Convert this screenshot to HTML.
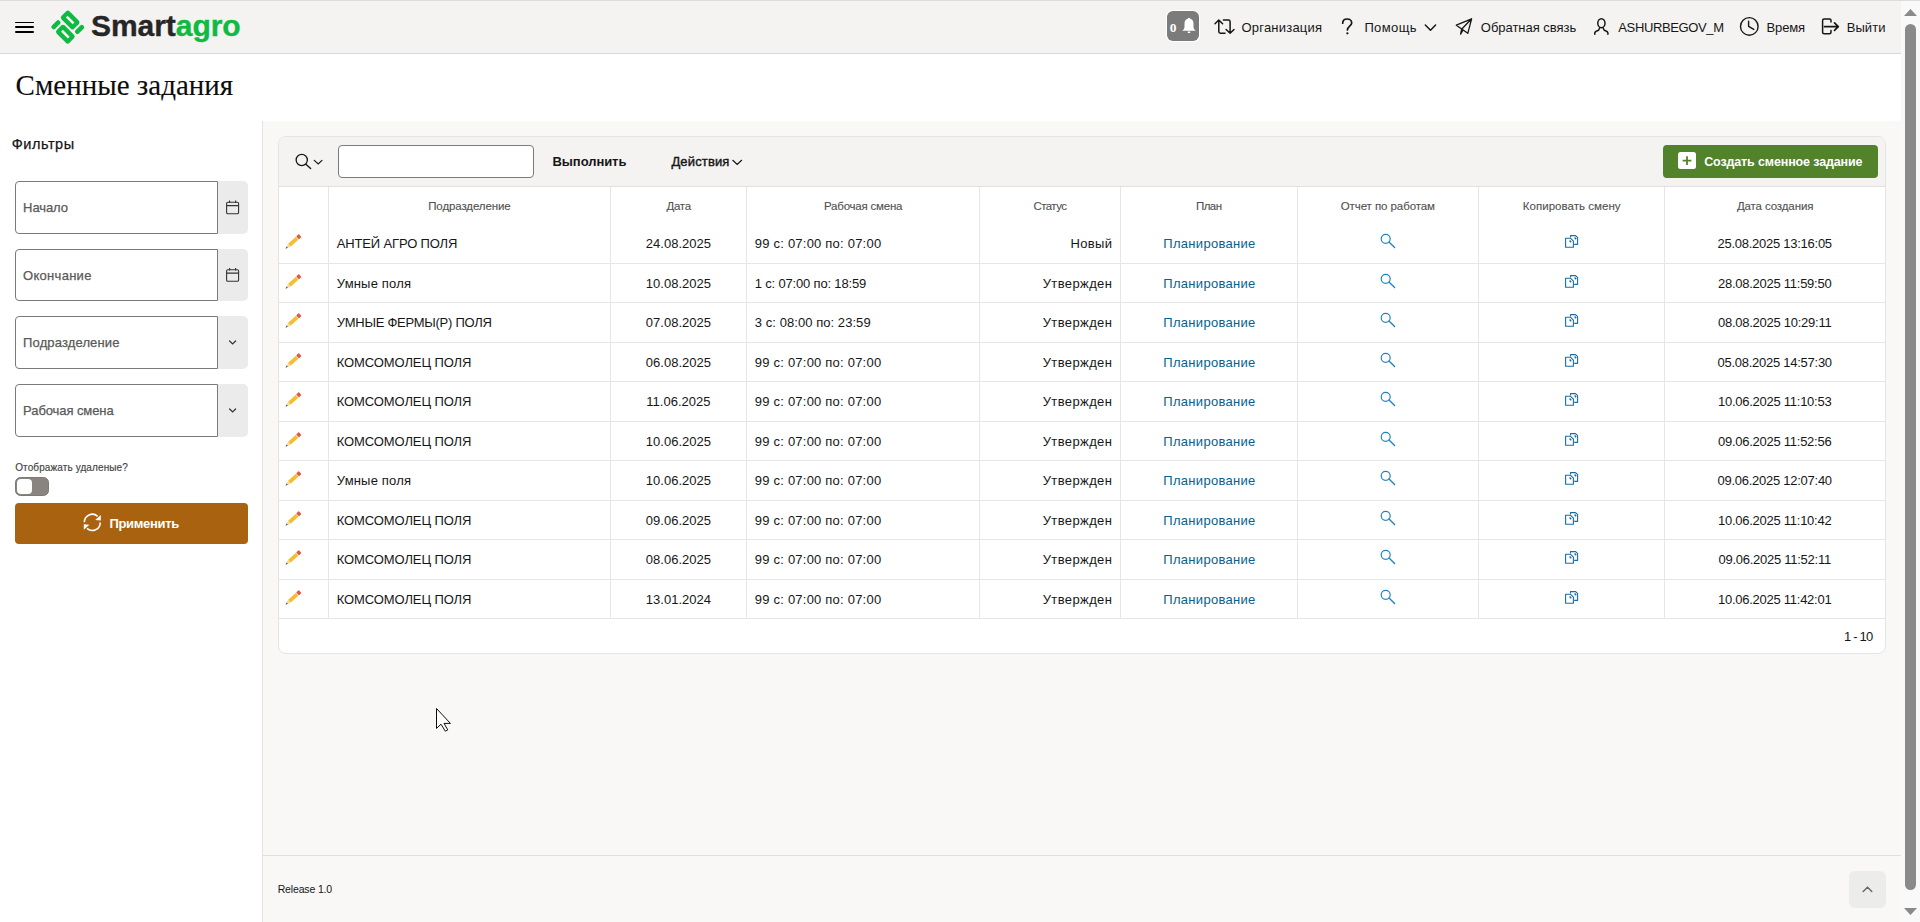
<!DOCTYPE html>
<html lang="ru"><head><meta charset="utf-8"><title>Сменные задания</title>
<style>
html,body{margin:0;padding:0;}
body{width:1920px;height:922px;overflow:hidden;position:relative;background:#fff;font-family:"Liberation Sans",sans-serif;color:#161616;}
.b{position:absolute;box-sizing:border-box;}
.t{position:absolute;white-space:nowrap;line-height:20px;font-family:"Liberation Sans",sans-serif;}
svg{position:absolute;overflow:visible;}
</style></head><body>
<div class="b" style="left:0px;top:0px;width:1920px;height:1px;background:#dcdcdc"></div>
<div class="b" style="left:0px;top:1px;width:1901px;height:53px;background:#f4f3f1;border-bottom:1px solid #d9d9d9"></div>
<div class="b" style="left:15px;top:21.8px;width:19px;height:1.3999999999999986px;background:#000;border-radius:1px"></div>
<div class="b" style="left:15px;top:26px;width:19px;height:2px;background:#000;border-radius:1px"></div>
<div class="b" style="left:15px;top:31px;width:19px;height:2px;background:#000;border-radius:1px"></div>
<svg style="left:0;top:0" width="120" height="54"><g transform="translate(67.75 27.1) rotate(45)" fill="#0fba43" fill-rule="evenodd"><path d="M-9.70,-12.40 h12.80 a2.6,2.6 0 0 1 2.6,2.6 v6.20 a2.6,2.6 0 0 1 -2.6,2.6 h-12.80 a2.6,2.6 0 0 1 -2.6,-2.6 v-6.20 a2.6,2.6 0 0 1 2.6,-2.6 zM-8.10,-8.00 v2.60 h9.60 v-2.60 z"/><path d="M-3.10,1.00 h12.80 a2.6,2.6 0 0 1 2.6,2.6 v6.20 a2.6,2.6 0 0 1 -2.6,2.6 h-12.80 a2.6,2.6 0 0 1 -2.6,-2.6 v-6.20 a2.6,2.6 0 0 1 2.6,-2.6 zM-1.50,5.40 v2.60 h9.60 v-2.60 z"/><path d="M9.70,-12.10 h0.60 a2.0,2.0 0 0 1 2.0,2.0 v6.80 a2.0,2.0 0 0 1 -2.0,2.0 h-0.60 a2.0,2.0 0 0 1 -2.0,-2.0 v-6.80 a2.0,2.0 0 0 1 2.0,-2.0 z"/><path d="M-10.30,1.30 h0.60 a2.0,2.0 0 0 1 2.0,2.0 v6.80 a2.0,2.0 0 0 1 -2.0,2.0 h-0.60 a2.0,2.0 0 0 1 -2.0,-2.0 v-6.80 a2.0,2.0 0 0 1 2.0,-2.0 z"/></g></svg>
<div class="t" style="left:91.00px;top:16px;font-size:30px;font-weight:700;color:#262626;letter-spacing:-0.050px;-webkit-text-stroke:0.35px currentColor;">Smart<span style="color:#0fba43">agro</span></div>
<div class="b" style="left:1167px;top:11px;width:32px;height:30px;background:#7b7b7b;border-radius:6px;box-shadow:0 0 0 1px #fff"></div>
<div class="t" style="left:1169.70px;top:18px;font-size:13.5px;font-family:'Liberation Serif', serif;font-weight:700;color:#fff;">0</div>
<svg style="left:1180px;top:15px" width="18" height="20"><path d="M9 2.7 c0.6 0 0.9 0.4 0.9 0.9 c2.4 0.5 3.6 2.4 3.6 5 v3.4 c0 1.6 0.9 2.6 1.9 3.3 v0.5 h-12.8 v-0.5 c1 -0.7 1.9 -1.7 1.9 -3.3 v-3.4 c0 -2.6 1.2 -4.5 3.6 -5 c0 -0.5 0.3 -0.9 0.9 -0.9z M7.8 16.4 h2.4 v1.6 h-2.4z" fill="#fff"/></svg>
<svg style="left:0;top:0" width="1920" height="54" fill="none" stroke="#161616" stroke-width="1.5" stroke-linecap="round" stroke-linejoin="round">
<path d="M1215 23.8 L1218.8 20 L1222.6 23.8 M1218.8 20 V31.6 Q1218.8 33.3 1220.5 33.3 H1225"/>
<path d="M1223.4 20 H1228.4 Q1230.1 20 1230.1 21.7 V33.3 M1226.1 29.5 L1230.1 33.3 L1234 29.5"/>
<path d="M1342.7 23.2 C1342.7 20.3 1344.7 19 1347.2 19 C1349.8 19 1351.7 20.7 1351.7 23 C1351.7 25.8 1347.4 26.6 1347.4 29.9" stroke-width="1.7"/>
<circle cx="1347.4" cy="33.3" r="1.15" fill="#161616" stroke="none"/>
<path d="M1425.3 25 L1430.5 30.2 L1435.6 25"/>
<path d="M1456.3 25.2 L1471.6 18.8 L1467.8 33.3 Z M1471.6 18.8 L1461.6 29.3 L1460.6 34.2 L1462.9 30.2" stroke-width="1.3"/>
<ellipse cx="1601.4" cy="23.2" rx="3.6" ry="4.5"/>
<path d="M1599.6 28 L1598.6 30.2 Q1594.8 31.2 1594.8 33 V34.3 M1603.2 28 L1604.2 30.2 Q1607.9 31.2 1607.9 33 V34.3"/>
<circle cx="1749.3" cy="26.4" r="8.8" stroke-width="1.4"/>
<path d="M1748.6 21.3 V26.3 L1753.8 29.4" stroke-width="1.4"/>
<path d="M1831 22 V20.4 Q1831 18.9 1829.5 18.9 H1824.1 Q1822.6 18.9 1822.6 20.4 V32.2 Q1822.6 33.7 1824.1 33.7 H1829.5 Q1831 33.7 1831 32.2 V30.6"/>
<path d="M1824.5 26.6 H1838.2 M1834.5 22.9 L1838.3 26.6 L1834.5 30.3" stroke-width="1.7"/>
</svg>
<div class="t" style="left:1241.50px;top:18px;font-size:13px;letter-spacing:0.211px;">Организация</div>
<div class="t" style="left:1364.40px;top:18px;font-size:13px;letter-spacing:0.384px;">Помощь</div>
<div class="t" style="left:1480.80px;top:18px;font-size:13px;letter-spacing:-0.024px;">Обратная связь</div>
<div class="t" style="left:1618.30px;top:18px;font-size:13px;letter-spacing:-0.371px;">ASHURBEGOV_M</div>
<div class="t" style="left:1766.50px;top:18px;font-size:13px;letter-spacing:-0.133px;">Время</div>
<div class="t" style="left:1846.70px;top:18px;font-size:13px;letter-spacing:0.055px;">Выйти</div>
<div class="t" style="left:15.60px;top:75px;font-size:29px;font-family:'Liberation Serif', serif;color:#0d0d0d;-webkit-text-stroke:0.1px currentColor;">Сменные задания</div>
<div class="t" style="left:11.70px;top:134px;font-size:14.5px;letter-spacing:0.557px;-webkit-text-stroke:0.25px currentColor;">Фильтры</div>
<div class="b" style="left:15px;top:181px;width:203px;height:53px;background:#fff;border:1px solid #7a7a7a;border-radius:4px 0 0 4px"></div>
<div class="b" style="left:218px;top:181px;width:30px;height:53px;background:#ebebeb;border-radius:0 5px 5px 0"></div>
<div class="t" style="left:23.10px;top:198px;font-size:13px;color:#595959;letter-spacing:-0.101px;-webkit-text-stroke:0.25px currentColor;">Начало</div>
<svg style="left:0;top:0" width="260" height="922" fill="none" stroke="#333" stroke-width="1.1"><rect x="226.6" y="202.3" width="12" height="11.4" rx="1.3"/><path d="M226.6 205.6 H238.6 M229.6 200.5 V202.9 M235.6 200.5 V202.9"/></svg>
<div class="b" style="left:15px;top:249px;width:203px;height:52px;background:#fff;border:1px solid #7a7a7a;border-radius:4px 0 0 4px"></div>
<div class="b" style="left:218px;top:249px;width:30px;height:52px;background:#ebebeb;border-radius:0 5px 5px 0"></div>
<div class="t" style="left:23.10px;top:266px;font-size:13px;color:#595959;letter-spacing:0.283px;-webkit-text-stroke:0.25px currentColor;">Окончание</div>
<svg style="left:0;top:0" width="260" height="922" fill="none" stroke="#333" stroke-width="1.1"><rect x="226.6" y="269.8" width="12" height="11.4" rx="1.3"/><path d="M226.6 273.1 H238.6 M229.6 268.0 V270.4 M235.6 268.0 V270.4"/></svg>
<div class="b" style="left:15px;top:316px;width:203px;height:53px;background:#fff;border:1px solid #7a7a7a;border-radius:4px 0 0 4px"></div>
<div class="b" style="left:218px;top:316px;width:30px;height:53px;background:#ebebeb;border-radius:0 5px 5px 0"></div>
<div class="t" style="left:23.10px;top:333px;font-size:13px;color:#595959;letter-spacing:0.133px;-webkit-text-stroke:0.25px currentColor;">Подразделение</div>
<svg style="left:0;top:0" width="260" height="922" fill="none" stroke="#333" stroke-width="1.2" stroke-linecap="round"><path d="M229.6 341.0 L232.6 344.0 L235.6 341.0"/></svg>
<div class="b" style="left:15px;top:384px;width:203px;height:53px;background:#fff;border:1px solid #7a7a7a;border-radius:4px 0 0 4px"></div>
<div class="b" style="left:218px;top:384px;width:30px;height:53px;background:#ebebeb;border-radius:0 5px 5px 0"></div>
<div class="t" style="left:23.10px;top:401px;font-size:13px;color:#595959;letter-spacing:-0.088px;-webkit-text-stroke:0.25px currentColor;">Рабочая смена</div>
<svg style="left:0;top:0" width="260" height="922" fill="none" stroke="#333" stroke-width="1.2" stroke-linecap="round"><path d="M229.6 409.0 L232.6 412.0 L235.6 409.0"/></svg>
<div class="t" style="left:15.20px;top:458px;font-size:10px;color:#444;letter-spacing:0.108px;-webkit-text-stroke:0.15px currentColor;">Отображать удаленые?</div>
<div class="b" style="left:15px;top:477px;width:34px;height:19px;background:#89847e;border-radius:5.5px;border:1.5px solid #7e7973"></div>
<div class="b" style="left:17px;top:479px;width:15px;height:15px;background:#fff;border-radius:4px"></div>
<div class="b" style="left:15px;top:503px;width:233px;height:41px;background:#a9620f;border-radius:4px"></div>
<svg style="left:0;top:0" width="260" height="922"><g fill="none" stroke="#fff" stroke-width="1.6"><path d="M84.4 522.3 A7.9 7.9 0 0 1 97.6 516.3"/><path d="M100.2 522.4 A7.9 7.9 0 0 1 87 528.4"/></g>
<path d="M95.2 519.9 L100.8 515 L100.8 520.6 Z M89.4 524.8 L83.8 529.8 L83.8 524.2 Z" fill="#fff"/></svg>
<div class="t" style="left:109.50px;top:514px;font-size:13px;font-weight:700;color:#fff;letter-spacing:-0.331px;">Применить</div>
<div class="b" style="left:262px;top:121px;width:1639px;height:801px;background:#f9f8f6;border-left:1px solid #e3e3e3"></div>
<div class="b" style="left:278px;top:136px;width:1608px;height:518px;background:#fff;border:1px solid #e4e4e4;border-radius:8px"></div>
<div class="b" style="left:279px;top:137px;width:1606px;height:50px;background:#f4f3f1;border-bottom:1px solid #e0e0e0;border-radius:7px 7px 0 0"></div>
<svg style="left:0;top:0" width="400" height="200" fill="none" stroke="#161616" stroke-linecap="round"><circle cx="301.75" cy="160" r="5.6" stroke-width="1.3"/><path d="M305.9 164.3 L310.6 168.5" stroke-width="1.4"/><path d="M314.3 160.4 L318.2 164 L322 160.4" stroke-width="1.2"/></svg>
<div class="b" style="left:338px;top:145px;width:196px;height:33px;background:#fff;border:1px solid #7a7a7a;border-radius:4px"></div>
<div class="t" style="left:552.50px;top:152px;font-size:13px;font-weight:700;letter-spacing:-0.066px;">Выполнить</div>
<div class="t" style="left:671.40px;top:152px;font-size:13px;letter-spacing:0.151px;-webkit-text-stroke:0.4px currentColor;">Действия</div>
<svg style="left:0;top:0" width="800" height="200" fill="none" stroke="#161616" stroke-width="1.2" stroke-linecap="round"><path d="M732.8 160.3 L737.2 164.5 L741.6 160.3"/></svg>
<div class="b" style="left:1663px;top:145px;width:215px;height:33px;background:#52822a;border-radius:4px"></div>
<div class="b" style="left:1678px;top:152px;width:18px;height:17px;background:#fff;border-radius:2.5px"></div>
<svg style="left:0;top:0" width="1900" height="200" stroke="#52822a" stroke-width="1.8"><path d="M1687 156.2 V165 M1682.6 160.6 H1691.4"/></svg>
<div class="t" style="left:1704.20px;top:152px;font-size:12.5px;font-weight:700;color:#fff;letter-spacing:-0.134px;">Создать сменное задание</div>
<div class="b" style="left:328px;top:187px;width:1px;height:431px;background:#e6e6e6"></div>
<div class="b" style="left:610px;top:187px;width:1px;height:431px;background:#e6e6e6"></div>
<div class="b" style="left:746px;top:187px;width:1px;height:431px;background:#e6e6e6"></div>
<div class="b" style="left:979px;top:187px;width:1px;height:431px;background:#e6e6e6"></div>
<div class="b" style="left:1120px;top:187px;width:1px;height:431px;background:#e6e6e6"></div>
<div class="b" style="left:1297px;top:187px;width:1px;height:431px;background:#e6e6e6"></div>
<div class="b" style="left:1478px;top:187px;width:1px;height:431px;background:#e6e6e6"></div>
<div class="b" style="left:1664px;top:187px;width:1px;height:431px;background:#e6e6e6"></div>
<div class="b" style="left:279px;top:263px;width:1606px;height:1px;background:#e6e6e6"></div>
<div class="b" style="left:279px;top:302px;width:1606px;height:1px;background:#e6e6e6"></div>
<div class="b" style="left:279px;top:342px;width:1606px;height:1px;background:#e6e6e6"></div>
<div class="b" style="left:279px;top:381px;width:1606px;height:1px;background:#e6e6e6"></div>
<div class="b" style="left:279px;top:421px;width:1606px;height:1px;background:#e6e6e6"></div>
<div class="b" style="left:279px;top:460px;width:1606px;height:1px;background:#e6e6e6"></div>
<div class="b" style="left:279px;top:500px;width:1606px;height:1px;background:#e6e6e6"></div>
<div class="b" style="left:279px;top:539px;width:1606px;height:1px;background:#e6e6e6"></div>
<div class="b" style="left:279px;top:579px;width:1606px;height:1px;background:#e6e6e6"></div>
<div class="b" style="left:279px;top:618px;width:1606px;height:1px;background:#e6e6e6"></div>
<div class="t" style="left:428.20px;top:196px;font-size:11.5px;color:#505050;letter-spacing:-0.106px;-webkit-text-stroke:0.1px currentColor;">Подразделение</div>
<div class="t" style="left:666.50px;top:196px;font-size:11.5px;color:#505050;letter-spacing:-0.310px;-webkit-text-stroke:0.1px currentColor;">Дата</div>
<div class="t" style="left:824.00px;top:196px;font-size:11.5px;color:#505050;letter-spacing:-0.215px;-webkit-text-stroke:0.1px currentColor;">Рабочая смена</div>
<div class="t" style="left:1033.50px;top:196px;font-size:11.5px;color:#505050;letter-spacing:-0.588px;-webkit-text-stroke:0.1px currentColor;">Статус</div>
<div class="t" style="left:1195.90px;top:196px;font-size:11.5px;color:#505050;letter-spacing:-0.505px;-webkit-text-stroke:0.1px currentColor;">План</div>
<div class="t" style="left:1340.70px;top:196px;font-size:11.5px;color:#505050;letter-spacing:-0.077px;-webkit-text-stroke:0.1px currentColor;">Отчет по работам</div>
<div class="t" style="left:1522.80px;top:196px;font-size:11.5px;color:#505050;letter-spacing:0.034px;-webkit-text-stroke:0.1px currentColor;">Копировать смену</div>
<div class="t" style="left:1736.90px;top:196px;font-size:11.5px;color:#505050;letter-spacing:-0.118px;-webkit-text-stroke:0.1px currentColor;">Дата создания</div>
<div class="t" style="left:336.80px;top:234px;font-size:13px;letter-spacing:-0.154px;">АНТЕЙ АГРО ПОЛЯ</div>
<div class="t" style="left:645.87px;top:234px;font-size:13px;">24.08.2025</div>
<div class="t" style="left:754.80px;top:234px;font-size:13px;letter-spacing:0.218px;">99 с: 07:00 по: 07:00</div>
<div class="t" style="left:1070.60px;top:234px;font-size:13px;letter-spacing:0.299px;">Новый</div>
<div class="t" style="left:1163.35px;top:234px;font-size:13px;color:#04628e;letter-spacing:0.289px;">Планирование</div>
<div class="t" style="left:1717.50px;top:234px;font-size:13px;letter-spacing:-0.260px;">25.08.2025 13:16:05</div>
<svg style="left:282px;top:232px" width="22" height="22"><g transform="translate(3.5 16.7) rotate(-42)"><path d="M0 0 L2.5 -1 V1 Z" fill="#474b55"/><path d="M2.4 -1.05 L5.4 -1.95 V1.95 L2.4 1.05 Z" fill="#f8da92"/><rect x="5.3" y="-1.95" width="10.2" height="3.9" fill="#f7bd30"/><rect x="15.4" y="-1.95" width="0.9" height="3.9" fill="#f3d9a6"/><rect x="16.2" y="-2" width="3.4" height="4" rx="0.7" fill="#e4563f"/></g></svg>
<svg style="left:1370px;top:223px" width="30" height="40" fill="none" stroke="#2682bd"><circle cx="15.7" cy="15.8" r="4.5" stroke-width="1.2"/><path d="M19 19.1 L24.6 24.4" stroke-width="1.4" stroke-linecap="round"/></svg>
<svg style="left:1560px;top:223px" width="30" height="40" fill="none" stroke="#1a6ea6" stroke-width="1.1" stroke-linejoin="round"><path d="M10.5 14.6 V12.6 H15.6 L17.6 14.6 V21.4 H14.2"/><path d="M5.6 15.3 H10.6 L13.4 18.1 V24.3 H5.6 Z"/><path d="M9.6 17.5 L11.2 19.2 M14.6 14.6 L16.2 16.3" stroke-width="1.4"/></svg>
<div class="t" style="left:336.80px;top:274px;font-size:13px;letter-spacing:0.177px;">Умные поля</div>
<div class="t" style="left:645.87px;top:274px;font-size:13px;">10.08.2025</div>
<div class="t" style="left:754.80px;top:274px;font-size:13px;letter-spacing:-0.175px;">1 с: 07:00 по: 18:59</div>
<div class="t" style="left:1042.70px;top:274px;font-size:13px;letter-spacing:0.387px;">Утвержден</div>
<div class="t" style="left:1163.35px;top:274px;font-size:13px;color:#04628e;letter-spacing:0.289px;">Планирование</div>
<div class="t" style="left:1717.99px;top:274px;font-size:13px;letter-spacing:-0.260px;">28.08.2025 11:59:50</div>
<svg style="left:282px;top:272px" width="22" height="22"><g transform="translate(3.5 16.7) rotate(-42)"><path d="M0 0 L2.5 -1 V1 Z" fill="#474b55"/><path d="M2.4 -1.05 L5.4 -1.95 V1.95 L2.4 1.05 Z" fill="#f8da92"/><rect x="5.3" y="-1.95" width="10.2" height="3.9" fill="#f7bd30"/><rect x="15.4" y="-1.95" width="0.9" height="3.9" fill="#f3d9a6"/><rect x="16.2" y="-2" width="3.4" height="4" rx="0.7" fill="#e4563f"/></g></svg>
<svg style="left:1370px;top:263px" width="30" height="40" fill="none" stroke="#2682bd"><circle cx="15.7" cy="15.8" r="4.5" stroke-width="1.2"/><path d="M19 19.1 L24.6 24.4" stroke-width="1.4" stroke-linecap="round"/></svg>
<svg style="left:1560px;top:263px" width="30" height="40" fill="none" stroke="#1a6ea6" stroke-width="1.1" stroke-linejoin="round"><path d="M10.5 14.6 V12.6 H15.6 L17.6 14.6 V21.4 H14.2"/><path d="M5.6 15.3 H10.6 L13.4 18.1 V24.3 H5.6 Z"/><path d="M9.6 17.5 L11.2 19.2 M14.6 14.6 L16.2 16.3" stroke-width="1.4"/></svg>
<div class="t" style="left:336.80px;top:313px;font-size:13px;letter-spacing:-0.269px;">УМНЫЕ ФЕРМЫ(Р) ПОЛЯ</div>
<div class="t" style="left:645.87px;top:313px;font-size:13px;">07.08.2025</div>
<div class="t" style="left:754.80px;top:313px;font-size:13px;letter-spacing:0.057px;">3 с: 08:00 по: 23:59</div>
<div class="t" style="left:1042.70px;top:313px;font-size:13px;letter-spacing:0.387px;">Утвержден</div>
<div class="t" style="left:1163.35px;top:313px;font-size:13px;color:#04628e;letter-spacing:0.289px;">Планирование</div>
<div class="t" style="left:1717.99px;top:313px;font-size:13px;letter-spacing:-0.260px;">08.08.2025 10:29:11</div>
<svg style="left:282px;top:311px" width="22" height="22"><g transform="translate(3.5 16.7) rotate(-42)"><path d="M0 0 L2.5 -1 V1 Z" fill="#474b55"/><path d="M2.4 -1.05 L5.4 -1.95 V1.95 L2.4 1.05 Z" fill="#f8da92"/><rect x="5.3" y="-1.95" width="10.2" height="3.9" fill="#f7bd30"/><rect x="15.4" y="-1.95" width="0.9" height="3.9" fill="#f3d9a6"/><rect x="16.2" y="-2" width="3.4" height="4" rx="0.7" fill="#e4563f"/></g></svg>
<svg style="left:1370px;top:302px" width="30" height="40" fill="none" stroke="#2682bd"><circle cx="15.7" cy="15.8" r="4.5" stroke-width="1.2"/><path d="M19 19.1 L24.6 24.4" stroke-width="1.4" stroke-linecap="round"/></svg>
<svg style="left:1560px;top:302px" width="30" height="40" fill="none" stroke="#1a6ea6" stroke-width="1.1" stroke-linejoin="round"><path d="M10.5 14.6 V12.6 H15.6 L17.6 14.6 V21.4 H14.2"/><path d="M5.6 15.3 H10.6 L13.4 18.1 V24.3 H5.6 Z"/><path d="M9.6 17.5 L11.2 19.2 M14.6 14.6 L16.2 16.3" stroke-width="1.4"/></svg>
<div class="t" style="left:336.80px;top:353px;font-size:13px;letter-spacing:-0.110px;">КОМСОМОЛЕЦ ПОЛЯ</div>
<div class="t" style="left:645.87px;top:353px;font-size:13px;">06.08.2025</div>
<div class="t" style="left:754.80px;top:353px;font-size:13px;letter-spacing:0.218px;">99 с: 07:00 по: 07:00</div>
<div class="t" style="left:1042.70px;top:353px;font-size:13px;letter-spacing:0.387px;">Утвержден</div>
<div class="t" style="left:1163.35px;top:353px;font-size:13px;color:#04628e;letter-spacing:0.289px;">Планирование</div>
<div class="t" style="left:1717.50px;top:353px;font-size:13px;letter-spacing:-0.260px;">05.08.2025 14:57:30</div>
<svg style="left:282px;top:351px" width="22" height="22"><g transform="translate(3.5 16.7) rotate(-42)"><path d="M0 0 L2.5 -1 V1 Z" fill="#474b55"/><path d="M2.4 -1.05 L5.4 -1.95 V1.95 L2.4 1.05 Z" fill="#f8da92"/><rect x="5.3" y="-1.95" width="10.2" height="3.9" fill="#f7bd30"/><rect x="15.4" y="-1.95" width="0.9" height="3.9" fill="#f3d9a6"/><rect x="16.2" y="-2" width="3.4" height="4" rx="0.7" fill="#e4563f"/></g></svg>
<svg style="left:1370px;top:342px" width="30" height="40" fill="none" stroke="#2682bd"><circle cx="15.7" cy="15.8" r="4.5" stroke-width="1.2"/><path d="M19 19.1 L24.6 24.4" stroke-width="1.4" stroke-linecap="round"/></svg>
<svg style="left:1560px;top:342px" width="30" height="40" fill="none" stroke="#1a6ea6" stroke-width="1.1" stroke-linejoin="round"><path d="M10.5 14.6 V12.6 H15.6 L17.6 14.6 V21.4 H14.2"/><path d="M5.6 15.3 H10.6 L13.4 18.1 V24.3 H5.6 Z"/><path d="M9.6 17.5 L11.2 19.2 M14.6 14.6 L16.2 16.3" stroke-width="1.4"/></svg>
<div class="t" style="left:336.80px;top:392px;font-size:13px;letter-spacing:-0.110px;">КОМСОМОЛЕЦ ПОЛЯ</div>
<div class="t" style="left:646.36px;top:392px;font-size:13px;">11.06.2025</div>
<div class="t" style="left:754.80px;top:392px;font-size:13px;letter-spacing:0.218px;">99 с: 07:00 по: 07:00</div>
<div class="t" style="left:1042.70px;top:392px;font-size:13px;letter-spacing:0.387px;">Утвержден</div>
<div class="t" style="left:1163.35px;top:392px;font-size:13px;color:#04628e;letter-spacing:0.289px;">Планирование</div>
<div class="t" style="left:1717.99px;top:392px;font-size:13px;letter-spacing:-0.260px;">10.06.2025 11:10:53</div>
<svg style="left:282px;top:390px" width="22" height="22"><g transform="translate(3.5 16.7) rotate(-42)"><path d="M0 0 L2.5 -1 V1 Z" fill="#474b55"/><path d="M2.4 -1.05 L5.4 -1.95 V1.95 L2.4 1.05 Z" fill="#f8da92"/><rect x="5.3" y="-1.95" width="10.2" height="3.9" fill="#f7bd30"/><rect x="15.4" y="-1.95" width="0.9" height="3.9" fill="#f3d9a6"/><rect x="16.2" y="-2" width="3.4" height="4" rx="0.7" fill="#e4563f"/></g></svg>
<svg style="left:1370px;top:381px" width="30" height="40" fill="none" stroke="#2682bd"><circle cx="15.7" cy="15.8" r="4.5" stroke-width="1.2"/><path d="M19 19.1 L24.6 24.4" stroke-width="1.4" stroke-linecap="round"/></svg>
<svg style="left:1560px;top:381px" width="30" height="40" fill="none" stroke="#1a6ea6" stroke-width="1.1" stroke-linejoin="round"><path d="M10.5 14.6 V12.6 H15.6 L17.6 14.6 V21.4 H14.2"/><path d="M5.6 15.3 H10.6 L13.4 18.1 V24.3 H5.6 Z"/><path d="M9.6 17.5 L11.2 19.2 M14.6 14.6 L16.2 16.3" stroke-width="1.4"/></svg>
<div class="t" style="left:336.80px;top:432px;font-size:13px;letter-spacing:-0.110px;">КОМСОМОЛЕЦ ПОЛЯ</div>
<div class="t" style="left:645.87px;top:432px;font-size:13px;">10.06.2025</div>
<div class="t" style="left:754.80px;top:432px;font-size:13px;letter-spacing:0.218px;">99 с: 07:00 по: 07:00</div>
<div class="t" style="left:1042.70px;top:432px;font-size:13px;letter-spacing:0.387px;">Утвержден</div>
<div class="t" style="left:1163.35px;top:432px;font-size:13px;color:#04628e;letter-spacing:0.289px;">Планирование</div>
<div class="t" style="left:1717.99px;top:432px;font-size:13px;letter-spacing:-0.260px;">09.06.2025 11:52:56</div>
<svg style="left:282px;top:430px" width="22" height="22"><g transform="translate(3.5 16.7) rotate(-42)"><path d="M0 0 L2.5 -1 V1 Z" fill="#474b55"/><path d="M2.4 -1.05 L5.4 -1.95 V1.95 L2.4 1.05 Z" fill="#f8da92"/><rect x="5.3" y="-1.95" width="10.2" height="3.9" fill="#f7bd30"/><rect x="15.4" y="-1.95" width="0.9" height="3.9" fill="#f3d9a6"/><rect x="16.2" y="-2" width="3.4" height="4" rx="0.7" fill="#e4563f"/></g></svg>
<svg style="left:1370px;top:421px" width="30" height="40" fill="none" stroke="#2682bd"><circle cx="15.7" cy="15.8" r="4.5" stroke-width="1.2"/><path d="M19 19.1 L24.6 24.4" stroke-width="1.4" stroke-linecap="round"/></svg>
<svg style="left:1560px;top:421px" width="30" height="40" fill="none" stroke="#1a6ea6" stroke-width="1.1" stroke-linejoin="round"><path d="M10.5 14.6 V12.6 H15.6 L17.6 14.6 V21.4 H14.2"/><path d="M5.6 15.3 H10.6 L13.4 18.1 V24.3 H5.6 Z"/><path d="M9.6 17.5 L11.2 19.2 M14.6 14.6 L16.2 16.3" stroke-width="1.4"/></svg>
<div class="t" style="left:336.80px;top:471px;font-size:13px;letter-spacing:0.177px;">Умные поля</div>
<div class="t" style="left:645.87px;top:471px;font-size:13px;">10.06.2025</div>
<div class="t" style="left:754.80px;top:471px;font-size:13px;letter-spacing:0.218px;">99 с: 07:00 по: 07:00</div>
<div class="t" style="left:1042.70px;top:471px;font-size:13px;letter-spacing:0.387px;">Утвержден</div>
<div class="t" style="left:1163.35px;top:471px;font-size:13px;color:#04628e;letter-spacing:0.289px;">Планирование</div>
<div class="t" style="left:1717.50px;top:471px;font-size:13px;letter-spacing:-0.260px;">09.06.2025 12:07:40</div>
<svg style="left:282px;top:469px" width="22" height="22"><g transform="translate(3.5 16.7) rotate(-42)"><path d="M0 0 L2.5 -1 V1 Z" fill="#474b55"/><path d="M2.4 -1.05 L5.4 -1.95 V1.95 L2.4 1.05 Z" fill="#f8da92"/><rect x="5.3" y="-1.95" width="10.2" height="3.9" fill="#f7bd30"/><rect x="15.4" y="-1.95" width="0.9" height="3.9" fill="#f3d9a6"/><rect x="16.2" y="-2" width="3.4" height="4" rx="0.7" fill="#e4563f"/></g></svg>
<svg style="left:1370px;top:460px" width="30" height="40" fill="none" stroke="#2682bd"><circle cx="15.7" cy="15.8" r="4.5" stroke-width="1.2"/><path d="M19 19.1 L24.6 24.4" stroke-width="1.4" stroke-linecap="round"/></svg>
<svg style="left:1560px;top:460px" width="30" height="40" fill="none" stroke="#1a6ea6" stroke-width="1.1" stroke-linejoin="round"><path d="M10.5 14.6 V12.6 H15.6 L17.6 14.6 V21.4 H14.2"/><path d="M5.6 15.3 H10.6 L13.4 18.1 V24.3 H5.6 Z"/><path d="M9.6 17.5 L11.2 19.2 M14.6 14.6 L16.2 16.3" stroke-width="1.4"/></svg>
<div class="t" style="left:336.80px;top:511px;font-size:13px;letter-spacing:-0.110px;">КОМСОМОЛЕЦ ПОЛЯ</div>
<div class="t" style="left:645.87px;top:511px;font-size:13px;">09.06.2025</div>
<div class="t" style="left:754.80px;top:511px;font-size:13px;letter-spacing:0.218px;">99 с: 07:00 по: 07:00</div>
<div class="t" style="left:1042.70px;top:511px;font-size:13px;letter-spacing:0.387px;">Утвержден</div>
<div class="t" style="left:1163.35px;top:511px;font-size:13px;color:#04628e;letter-spacing:0.289px;">Планирование</div>
<div class="t" style="left:1717.99px;top:511px;font-size:13px;letter-spacing:-0.260px;">10.06.2025 11:10:42</div>
<svg style="left:282px;top:509px" width="22" height="22"><g transform="translate(3.5 16.7) rotate(-42)"><path d="M0 0 L2.5 -1 V1 Z" fill="#474b55"/><path d="M2.4 -1.05 L5.4 -1.95 V1.95 L2.4 1.05 Z" fill="#f8da92"/><rect x="5.3" y="-1.95" width="10.2" height="3.9" fill="#f7bd30"/><rect x="15.4" y="-1.95" width="0.9" height="3.9" fill="#f3d9a6"/><rect x="16.2" y="-2" width="3.4" height="4" rx="0.7" fill="#e4563f"/></g></svg>
<svg style="left:1370px;top:500px" width="30" height="40" fill="none" stroke="#2682bd"><circle cx="15.7" cy="15.8" r="4.5" stroke-width="1.2"/><path d="M19 19.1 L24.6 24.4" stroke-width="1.4" stroke-linecap="round"/></svg>
<svg style="left:1560px;top:500px" width="30" height="40" fill="none" stroke="#1a6ea6" stroke-width="1.1" stroke-linejoin="round"><path d="M10.5 14.6 V12.6 H15.6 L17.6 14.6 V21.4 H14.2"/><path d="M5.6 15.3 H10.6 L13.4 18.1 V24.3 H5.6 Z"/><path d="M9.6 17.5 L11.2 19.2 M14.6 14.6 L16.2 16.3" stroke-width="1.4"/></svg>
<div class="t" style="left:336.80px;top:550px;font-size:13px;letter-spacing:-0.110px;">КОМСОМОЛЕЦ ПОЛЯ</div>
<div class="t" style="left:645.87px;top:550px;font-size:13px;">08.06.2025</div>
<div class="t" style="left:754.80px;top:550px;font-size:13px;letter-spacing:0.218px;">99 с: 07:00 по: 07:00</div>
<div class="t" style="left:1042.70px;top:550px;font-size:13px;letter-spacing:0.387px;">Утвержден</div>
<div class="t" style="left:1163.35px;top:550px;font-size:13px;color:#04628e;letter-spacing:0.289px;">Планирование</div>
<div class="t" style="left:1718.48px;top:550px;font-size:13px;letter-spacing:-0.260px;">09.06.2025 11:52:11</div>
<svg style="left:282px;top:548px" width="22" height="22"><g transform="translate(3.5 16.7) rotate(-42)"><path d="M0 0 L2.5 -1 V1 Z" fill="#474b55"/><path d="M2.4 -1.05 L5.4 -1.95 V1.95 L2.4 1.05 Z" fill="#f8da92"/><rect x="5.3" y="-1.95" width="10.2" height="3.9" fill="#f7bd30"/><rect x="15.4" y="-1.95" width="0.9" height="3.9" fill="#f3d9a6"/><rect x="16.2" y="-2" width="3.4" height="4" rx="0.7" fill="#e4563f"/></g></svg>
<svg style="left:1370px;top:539px" width="30" height="40" fill="none" stroke="#2682bd"><circle cx="15.7" cy="15.8" r="4.5" stroke-width="1.2"/><path d="M19 19.1 L24.6 24.4" stroke-width="1.4" stroke-linecap="round"/></svg>
<svg style="left:1560px;top:539px" width="30" height="40" fill="none" stroke="#1a6ea6" stroke-width="1.1" stroke-linejoin="round"><path d="M10.5 14.6 V12.6 H15.6 L17.6 14.6 V21.4 H14.2"/><path d="M5.6 15.3 H10.6 L13.4 18.1 V24.3 H5.6 Z"/><path d="M9.6 17.5 L11.2 19.2 M14.6 14.6 L16.2 16.3" stroke-width="1.4"/></svg>
<div class="t" style="left:336.80px;top:590px;font-size:13px;letter-spacing:-0.110px;">КОМСОМОЛЕЦ ПОЛЯ</div>
<div class="t" style="left:645.87px;top:590px;font-size:13px;">13.01.2024</div>
<div class="t" style="left:754.80px;top:590px;font-size:13px;letter-spacing:0.218px;">99 с: 07:00 по: 07:00</div>
<div class="t" style="left:1042.70px;top:590px;font-size:13px;letter-spacing:0.387px;">Утвержден</div>
<div class="t" style="left:1163.35px;top:590px;font-size:13px;color:#04628e;letter-spacing:0.289px;">Планирование</div>
<div class="t" style="left:1717.99px;top:590px;font-size:13px;letter-spacing:-0.260px;">10.06.2025 11:42:01</div>
<svg style="left:282px;top:588px" width="22" height="22"><g transform="translate(3.5 16.7) rotate(-42)"><path d="M0 0 L2.5 -1 V1 Z" fill="#474b55"/><path d="M2.4 -1.05 L5.4 -1.95 V1.95 L2.4 1.05 Z" fill="#f8da92"/><rect x="5.3" y="-1.95" width="10.2" height="3.9" fill="#f7bd30"/><rect x="15.4" y="-1.95" width="0.9" height="3.9" fill="#f3d9a6"/><rect x="16.2" y="-2" width="3.4" height="4" rx="0.7" fill="#e4563f"/></g></svg>
<svg style="left:1370px;top:579px" width="30" height="40" fill="none" stroke="#2682bd"><circle cx="15.7" cy="15.8" r="4.5" stroke-width="1.2"/><path d="M19 19.1 L24.6 24.4" stroke-width="1.4" stroke-linecap="round"/></svg>
<svg style="left:1560px;top:579px" width="30" height="40" fill="none" stroke="#1a6ea6" stroke-width="1.1" stroke-linejoin="round"><path d="M10.5 14.6 V12.6 H15.6 L17.6 14.6 V21.4 H14.2"/><path d="M5.6 15.3 H10.6 L13.4 18.1 V24.3 H5.6 Z"/><path d="M9.6 17.5 L11.2 19.2 M14.6 14.6 L16.2 16.3" stroke-width="1.4"/></svg>
<div class="t" style="left:1843.90px;top:627px;font-size:13px;letter-spacing:-0.783px;">1 - 10</div>
<div class="b" style="left:263px;top:855px;width:1638px;height:1px;background:#e0dfde"></div>
<div class="t" style="left:277.70px;top:879px;font-size:10.5px;letter-spacing:-0.152px;">Release 1.0</div>
<div class="b" style="left:1849px;top:871px;width:37px;height:37px;background:#ececeb;border-radius:6px"></div>
<svg style="left:0;top:0" width="1920" height="922" fill="none" stroke="#666" stroke-width="1.4" stroke-linecap="round"><path d="M1863.2 891.6 L1867.5 887.3 L1871.8 891.6"/></svg>
<div class="b" style="left:1901px;top:1px;width:19px;height:921px;background:#f9f9f9"></div>
<div class="b" style="left:1905px;top:24px;width:11px;height:866px;background:#8a8a8a;border-radius:5.5px"></div>
<svg style="left:0;top:0" width="1920" height="922" fill="#8a8a8a"><path d="M1904 16 H1917 L1910.5 9 Z M1904 908 H1917 L1910.5 915 Z"/></svg>
<svg style="left:0;top:0" width="1920" height="922"><path d="M436.5 708.5 V728.4 L441 724.2 L445.3 731.2 L447.8 729.9 L444 723.4 H450.4 Z" fill="#fff" stroke="#000" stroke-width="0.95" stroke-linejoin="round"/></svg>
</body></html>
